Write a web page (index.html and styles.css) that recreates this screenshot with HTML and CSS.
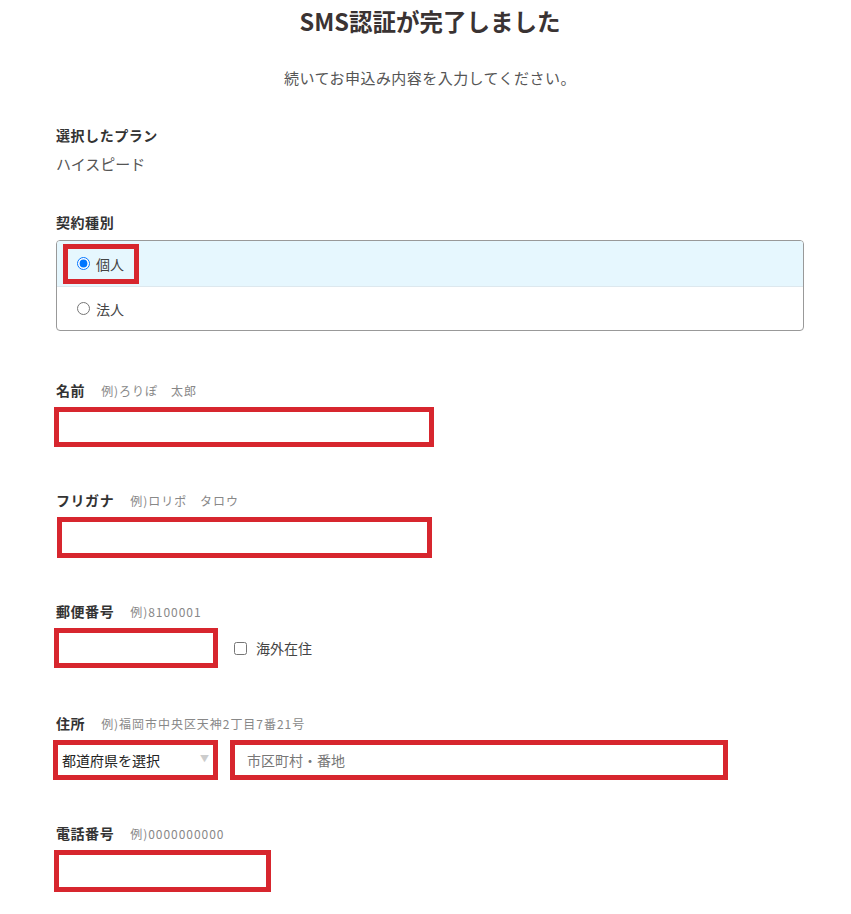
FILE: index.html
```html
<!DOCTYPE html>
<html lang="ja">
<head>
    <meta charset="UTF-8">
    <meta name="viewport" content="width=device-width, initial-scale=1.0">
    <title>SMS認証が完了しました</title>
    <link rel="stylesheet" href="styles.css">
</head>
<body>
    <div class="page">
        <h1>SMS認証が完了しました</h1>
        <p class="lead">続いてお申込み内容を入力してください。</p>

        <div class="plan">
            <div class="label">選択したプラン</div>
            <div class="plan-name">ハイスピード</div>
        </div>

        <div class="contract">
            <div class="label">契約種別</div>
            <div class="choices">
                <div class="choice selected">
                    <label class="mark"><input type="radio" name="type" checked> 個人</label>
                </div>
                <div class="choice">
                    <label><input type="radio" name="type"> 法人</label>
                </div>
            </div>
        </div>

        <div class="field">
            <div class="label">名前<span class="hint">例)ろりぽ　太郎</span></div>
            <input type="text" class="mark name">
        </div>

        <div class="field">
            <div class="label">フリガナ<span class="hint">例)ロリポ　タロウ</span></div>
            <input type="text" class="mark kana">
        </div>

        <div class="field">
            <div class="label">郵便番号<span class="hint">例)8100001</span></div>
            <div class="row">
                <input type="text" class="mark zip">
                <label class="abroad"><input type="checkbox"> 海外在住</label>
            </div>
        </div>

        <div class="field address-field">
            <div class="label">住所<span class="hint">例)福岡市中央区天神2丁目7番21号</span></div>
            <div class="row">
                <div class="select-wrap">
                    <select class="mark pref">
                        <option>都道府県を選択</option>
                    </select>
                </div>
                <input type="text" class="mark address" placeholder="市区町村・番地">
            </div>
        </div>

        <div class="field">
            <div class="label">電話番号<span class="hint">例)0000000000</span></div>
            <input type="text" class="mark tel">
        </div>
    </div>
</body>
</html>
```

FILE: styles.css
```css
body {
    margin: 0;
    font-family: "Noto Sans CJK JP", "Noto Sans", sans-serif;
    color: #333;
    background: #fff;
}
.page {
    width: 748px;
    margin-left: 56px;
}
h1 {
    margin: 5px 0 0;
    font-size: 23.5px;
    line-height: 32px;
    text-align: center;
    color: #3a3333;
}
.lead {
    margin: 30px 0 0;
    font-size: 15px;
    line-height: 22px;
    text-align: center;
    color: #555;
    letter-spacing: 0.03em;
}
.label {
    height: 20px;
    font-size: 14px;
    line-height: 20px;
    font-weight: bold;
    color: #333;
    letter-spacing: 0.04em;
}
.hint {
    margin-left: 16px;
    font-size: 12px;
    line-height: 14px;
    font-weight: normal;
    color: #888;
    letter-spacing: 0.08em;
}
.plan {
    margin-top: 36px;
}
.plan-name {
    margin-top: 9px;
    font-size: 15px;
    line-height: 20px;
    color: #555;
}
.contract {
    margin-top: 38px;
}
.choices {
    margin-top: 8px;
    border: 1px solid #999;
    border-radius: 4px;
    overflow: hidden;
}
.choice {
    height: 43px;
    display: flex;
    align-items: center;
    font-size: 14px;
    color: #444;
}
.choice.selected {
    height: 45px;
    background: #e6f7fe;
    border-bottom: 1px solid #dde8ee;
}
.choice label {
    display: flex;
    align-items: center;
    gap: 6px;
    padding-left: 20px;
}
.choice input {
    margin: 0;
    width: 13px;
    height: 13px;
}
.choice label.mark {
    margin-left: 6px;
    width: 76px;
    height: 40px;
    box-sizing: border-box;
    padding-left: 9px;
    border: 5px solid #d7262e;
}
.field {
    margin-top: 43px;
}
.contract + .field {
    margin-top: 49px;
}
.address-field {
    margin-top: 45px;
}
.field .label {
    margin-bottom: 7px;
}
input.mark,
select.mark {
    display: block;
    box-sizing: border-box;
    height: 40px;
    margin: 0 0 0 -2px;
    border: 5px solid #d7262e;
    background: #fff;
    font-family: inherit;
    font-size: 14px;
    color: #222;
    outline: none;
}
.name {
    width: 380px;
}
.kana {
    width: 375px;
    height: 41px !important;
    margin-left: 1px !important;
}
.zip {
    width: 164px;
}
.tel {
    width: 217px;
    height: 42px !important;
}
.row {
    display: flex;
    align-items: center;
}
.abroad {
    display: flex;
    align-items: center;
    gap: 9px;
    margin-left: 16px;
    font-size: 14px;
    color: #444;
}
.abroad input {
    margin: 0;
    width: 13px;
    height: 13px;
}
.select-wrap {
    position: relative;
}
.select-wrap::after {
    content: "▼";
    position: absolute;
    left: 144px;
    top: 12px;
    font-size: 9px;
    color: #ccc;
}
.pref {
    width: 165px;
    padding-left: 4px;
    appearance: none;
    -webkit-appearance: none;
    border-radius: 0;
    margin-left: -3px !important;
}
.address {
    width: 498px;
    margin-left: 12px !important;
    padding-left: 12px;
}
.address::placeholder {
    color: #777;
}
```
